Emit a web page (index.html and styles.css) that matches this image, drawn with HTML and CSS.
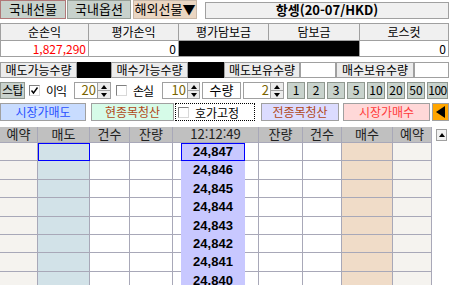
FILE: index.html
```html
<!DOCTYPE html>
<html lang="ko">

<head>
    <meta charset="utf-8">
    <title>해외선물 주문</title>
    <link rel="stylesheet" href="styles.css">
</head>

<body>
    <!-- Market tabs and symbol -->
    <div class="tabs">
        <div class="tab tab-on">국내선물</div>
        <div class="tab tab-opt">국내옵션</div>
        <div class="tab tab-fx">해외선물▼</div>
        <div class="title">항셍(20-07/HKD)</div>
    </div>

    <!-- Account summary -->
    <div class="summary">
        <div class="sum-head">순손익</div>
        <div class="sum-head">평가손익</div>
        <div class="sum-head">평가담보금</div>
        <div class="sum-head">담보금</div>
        <div class="sum-head">로스컷</div>
        <div class="sum-val sum-red">1,827,290</div>
        <div class="sum-val">0</div>
        <div class="sum-val sum-black"></div>
        <div class="sum-val">0</div>
    </div>

    <!-- Available / held quantities -->
    <div class="qty-row">
        <div class="qty-label qty-w77">매도가능수량</div>
        <div class="qty-black qty-w34"></div>
        <div class="qty-label qty-w77">매수가능수량</div>
        <div class="qty-black qty-w36"></div>
        <div class="qty-label qty-w76">매도보유수량</div>
        <div class="qty-box qty-w36"></div>
        <div class="qty-label qty-w78">매수보유수량</div>
        <div class="qty-box qty-w35"></div>
    </div>

    <!-- Stop settings and quantity -->
    <div class="ctrl-row">
        <div class="stop-btn">스탑</div>
        <div class="check check-profit">
            <svg width="9" height="9" viewBox="0 0 9 9"><path d="M1.5 4.5 L3.5 7 L7.5 1.5" fill="none" stroke="#000" stroke-width="1.4"/></svg>
        </div>
        <div class="ctrl-label">이익</div>
        <div class="spin spin-profit">
            <div class="spin-input">20</div>
            <div class="spin-arrows"><span><i class="tri-up"></i></span><span><i class="tri-dn"></i></span></div>
        </div>
        <div class="check check-loss"></div>
        <div class="ctrl-label">손실</div>
        <div class="spin spin-loss">
            <div class="spin-input">10</div>
            <div class="spin-arrows"><span><i class="tri-up"></i></span><span><i class="tri-dn"></i></span></div>
        </div>
        <div class="qty-name">수량</div>
        <div class="spin spin-qty">
            <div class="spin-input">2</div>
            <div class="spin-arrows"><span><i class="tri-up"></i></span><span><i class="tri-dn"></i></span></div>
        </div>
        <div class="steps">
            <div class="step">1</div>
            <div class="step">2</div>
            <div class="step">3</div>
            <div class="step">5</div>
            <div class="step">10</div>
            <div class="step">20</div>
            <div class="step">50</div>
            <div class="step step-wide">100</div>
        </div>
    </div>

    <!-- Order buttons -->
    <div class="order-row">
        <div class="order-btn sell-mkt">시장가매도</div>
        <div class="order-btn clear-one">현종목청산</div>
        <div class="fix">
            <div class="check check-fix"></div>
            <span>호가고정</span>
        </div>
        <div class="order-btn clear-all">전종목청산</div>
        <div class="order-btn buy-mkt">시장가매수</div>
        <div class="arrow-btn"><i class="tri-left"></i></div>
    </div>

    <!-- Order book -->
    <div class="book">
        <div class="book-row book-head">
            <div class="cell col-rsv-l">예약</div>
            <div class="cell col-sell">매도</div>
            <div class="cell col-cnt-l">건수</div>
            <div class="cell col-rem-l">잔량</div>
            <div class="cell col-mid">12:12:49</div>
            <div class="cell col-rem-r">잔량</div>
            <div class="cell col-cnt-r">건수</div>
            <div class="cell col-buy">매수</div>
            <div class="cell col-rsv-r">예약</div>
            <div class="col-scroll"><div class="scroll-up"><i class="tri-up"></i></div></div>
        </div>

        <div class="book-row">
            <div class="cell col-rsv-l"></div>
            <div class="cell col-sell sel"></div>
            <div class="cell col-cnt-l"></div>
            <div class="cell col-rem-l"></div>
            <div class="cell col-mid"><div class="gap-l"></div><div class="price sel">24,847</div><div class="gap-r"></div></div>
            <div class="cell col-rem-r"></div>
            <div class="cell col-cnt-r"></div>
            <div class="cell col-buy"></div>
            <div class="cell col-rsv-r"></div>
            <div class="col-scroll"></div>
        </div>
        <div class="book-row">
            <div class="cell col-rsv-l"></div>
            <div class="cell col-sell"></div>
            <div class="cell col-cnt-l"></div>
            <div class="cell col-rem-l"></div>
            <div class="cell col-mid"><div class="gap-l"></div><div class="price">24,846</div><div class="gap-r"></div></div>
            <div class="cell col-rem-r"></div>
            <div class="cell col-cnt-r"></div>
            <div class="cell col-buy"></div>
            <div class="cell col-rsv-r"></div>
            <div class="col-scroll"></div>
        </div>
        <div class="book-row">
            <div class="cell col-rsv-l"></div>
            <div class="cell col-sell"></div>
            <div class="cell col-cnt-l"></div>
            <div class="cell col-rem-l"></div>
            <div class="cell col-mid"><div class="gap-l"></div><div class="price">24,845</div><div class="gap-r"></div></div>
            <div class="cell col-rem-r"></div>
            <div class="cell col-cnt-r"></div>
            <div class="cell col-buy"></div>
            <div class="cell col-rsv-r"></div>
            <div class="col-scroll"></div>
        </div>
        <div class="book-row">
            <div class="cell col-rsv-l"></div>
            <div class="cell col-sell"></div>
            <div class="cell col-cnt-l"></div>
            <div class="cell col-rem-l"></div>
            <div class="cell col-mid"><div class="gap-l"></div><div class="price">24,844</div><div class="gap-r"></div></div>
            <div class="cell col-rem-r"></div>
            <div class="cell col-cnt-r"></div>
            <div class="cell col-buy"></div>
            <div class="cell col-rsv-r"></div>
            <div class="col-scroll"></div>
        </div>
        <div class="book-row">
            <div class="cell col-rsv-l"></div>
            <div class="cell col-sell"></div>
            <div class="cell col-cnt-l"></div>
            <div class="cell col-rem-l"></div>
            <div class="cell col-mid"><div class="gap-l"></div><div class="price">24,843</div><div class="gap-r"></div></div>
            <div class="cell col-rem-r"></div>
            <div class="cell col-cnt-r"></div>
            <div class="cell col-buy"></div>
            <div class="cell col-rsv-r"></div>
            <div class="col-scroll"></div>
        </div>
        <div class="book-row">
            <div class="cell col-rsv-l"></div>
            <div class="cell col-sell"></div>
            <div class="cell col-cnt-l"></div>
            <div class="cell col-rem-l"></div>
            <div class="cell col-mid"><div class="gap-l"></div><div class="price">24,842</div><div class="gap-r"></div></div>
            <div class="cell col-rem-r"></div>
            <div class="cell col-cnt-r"></div>
            <div class="cell col-buy"></div>
            <div class="cell col-rsv-r"></div>
            <div class="col-scroll"></div>
        </div>
        <div class="book-row">
            <div class="cell col-rsv-l"></div>
            <div class="cell col-sell"></div>
            <div class="cell col-cnt-l"></div>
            <div class="cell col-rem-l"></div>
            <div class="cell col-mid"><div class="gap-l"></div><div class="price">24,841</div><div class="gap-r"></div></div>
            <div class="cell col-rem-r"></div>
            <div class="cell col-cnt-r"></div>
            <div class="cell col-buy"></div>
            <div class="cell col-rsv-r"></div>
            <div class="col-scroll"></div>
        </div>
        <div class="book-row">
            <div class="cell col-rsv-l"></div>
            <div class="cell col-sell"></div>
            <div class="cell col-cnt-l"></div>
            <div class="cell col-rem-l"></div>
            <div class="cell col-mid"><div class="gap-l"></div><div class="price">24,840</div><div class="gap-r"></div></div>
            <div class="cell col-rem-r"></div>
            <div class="cell col-cnt-r"></div>
            <div class="cell col-buy"></div>
            <div class="cell col-rsv-r"></div>
            <div class="col-scroll"></div>
        </div>
    </div>
</body>

</html>
```
FILE: styles.css
```css
* {
    box-sizing: border-box;
}

body {
    margin: 0;
    width: 449px;
    height: 285px;
    overflow: hidden;
    background-color: #ffffff;
    color: #000000;
    font-family: "Noto Sans CJK KR", sans-serif;
    font-size: 12px;
}

/* Top tabs */
.tabs {
    display: flex;
    height: 20px;
}

.tabs > div,
.qty-row > div,
.ctrl-row > div,
.order-row > div,
.book-row > div {
    flex-shrink: 0;
    white-space: nowrap;
}

.tab {
    width: 66px;
    height: 19px;
    border: 1px solid #98a098;
    background-color: #c8d2cc;
    text-align: center;
    line-height: 16px;
    font-size: 13px;
}

.tab-on {
    border-color: #b07878;
}

.tab-opt {
    width: 64px;
    margin-left: 1px;
}

.tab-fx {
    width: 64px;
    margin-left: 2px;
    background-color: #ead6c2;
    border-color: #c8b8a8;
}

.tabs .title {
    flex: 1;
    height: 17px;
    margin-top: 2px;
    margin-left: 8px;
    border: 1px solid #a0a0a0;
    background-color: #f0f0f0;
    text-align: center;
    font-weight: bold;
    font-size: 13px;
    line-height: 14px;
}

/* Account summary */
.summary {
    display: grid;
    grid-template-columns: 87px 89px 89px 90px 88px;
    grid-template-rows: 16px 15px;
    gap: 1px;
    padding: 1px;
    margin-top: 3px;
    background-color: #a0a0a0;
}

.sum-head {
    overflow: hidden;
    background-color: #f0f0f0;
    text-align: center;
    line-height: 16px;
    font-size: 12px;
}

.sum-val {
    overflow: hidden;
    background-color: #ffffff;
    text-align: right;
    padding-right: 2px;
    line-height: 15px;
    font-size: 12px;
}

.sum-red {
    color: #ff0000;
}

.sum-black {
    grid-column: span 2;
    background-color: #000000;
}

/* Quantity row */
.qty-row {
    display: flex;
    height: 16px;
    margin-top: 5px;
}

.qty-label {
    border: 1px solid #a0a0a0;
    background-color: #ececec;
    text-align: center;
    line-height: 13px;
    font-size: 12px;
}

.qty-black {
    background-color: #000000;
}

.qty-box {
    border: 1px solid #a0a0a0;
    background-color: #ffffff;
}

.qty-w34 { width: 34px; }
.qty-w35 { width: 35px; }
.qty-w36 { width: 36px; }
.qty-w76 { width: 76px; }
.qty-w77 { width: 77px; }
.qty-w78 { width: 78px; }

/* Stop / quantity controls */
.ctrl-row {
    display: flex;
    align-items: center;
    height: 17px;
    margin-top: 4px;
}

.stop-btn {
    width: 25px;
    height: 17px;
    border: 1px solid #909890;
    background-color: #c8d2cc;
    text-align: center;
    line-height: 14px;
    font-size: 12px;
    letter-spacing: -0.5px;
}

.check {
    display: flex;
    align-items: center;
    justify-content: center;
    width: 11px;
    height: 11px;
    border: 1px solid;
    border-color: #808080 #d8d8d8 #d8d8d8 #808080;
    background-color: #ffffff;
}

.check-profit {
    margin-left: 4px;
}

.check-loss {
    margin-left: 5px;
}

.ctrl-label {
    width: 22px;
    margin-left: 6px;
    font-size: 12px;
    line-height: 17px;
    letter-spacing: -1px;
}

.spin {
    display: flex;
    height: 17px;
}

.spin-profit {
    margin-left: 6px;
}

.spin-loss {
    margin-left: 7px;
}

.spin-qty {
    margin-left: 2px;
}

.spin-input {
    width: 24px;
    border: 1px solid #a0a0a0;
    background-color: #ffffff;
    text-align: right;
    padding-right: 1px;
    color: #7a6400;
    font-size: 13px;
    line-height: 14px;
}

.spin-loss .spin-input {
    width: 26px;
}

.spin-qty .spin-input {
    width: 28px;
}

.spin-arrows {
    display: flex;
    flex-direction: column;
    width: 13px;
    border: 1px solid #a0a0a0;
    border-left: none;
    background-color: #ececec;
}

.spin-loss .spin-arrows {
    width: 12px;
}

.spin-arrows span {
    flex: 1;
    display: flex;
    align-items: center;
    justify-content: center;
}

.spin-arrows span + span {
    border-top: 1px solid #a0a0a0;
}

.tri-up {
    width: 0;
    height: 0;
    border-left: 3px solid transparent;
    border-right: 3px solid transparent;
    border-bottom: 4px solid #000000;
}

.tri-dn {
    width: 0;
    height: 0;
    border-left: 3px solid transparent;
    border-right: 3px solid transparent;
    border-top: 4px solid #000000;
}

.qty-name {
    width: 39px;
    height: 17px;
    margin-left: 2px;
    border: 1px solid #a0a0a0;
    background-color: #ffffff;
    text-align: center;
    font-size: 13px;
    line-height: 14px;
}

.steps {
    display: flex;
    gap: 2px;
    margin-left: 3px;
}

.step {
    width: 18px;
    height: 17px;
    border: 1px solid #909890;
    background-color: #c8d2cc;
    text-align: center;
    font-size: 12px;
    line-height: 14px;
}

.step-wide {
    width: 21px;
    letter-spacing: -0.5px;
}

/* Order buttons */
.order-row {
    display: flex;
    height: 18px;
    margin-top: 4px;
}

.order-btn {
    border: 1px solid #a0a0a0;
    text-align: center;
    font-size: 12px;
    line-height: 15px;
}

.sell-mkt {
    width: 86px;
    background-color: #c8dcff;
    color: #2850ff;
}

.clear-one {
    width: 83px;
    margin-left: 5px;
    background-color: #d6fbe8;
    color: #b04818;
}

.order-row .fix {
    display: flex;
    align-items: center;
    gap: 6px;
    width: 80px;
    margin-left: 1px;
    padding-left: 2px;
    border: 1px dotted #000000;
    font-size: 12px;
}

.clear-all {
    width: 78px;
    margin-left: 6px;
    background-color: #dcdcff;
    color: #b04818;
}

.buy-mkt {
    width: 87px;
    margin-left: 4px;
    background-color: #ffd8d8;
    color: #ff3838;
}

.order-row .arrow-btn {
    display: flex;
    align-items: center;
    justify-content: center;
    width: 17px;
    margin-left: 2px;
    border: 1px solid #a0a0a0;
    background-color: #ffa500;
}

.tri-left {
    width: 0;
    height: 0;
    border-top: 6px solid transparent;
    border-bottom: 6px solid transparent;
    border-right: 9px solid #000000;
}

/* Order book */
.book {
    margin-top: 6px;
}

.book-row {
    display: flex;
    height: 18.4px;
}

.book-head {
    height: 16px;
}

.cell {
    border-right: 1px solid #a8a8b8;
    border-bottom: 1px solid #a8a8b8;
}

.book-head .cell {
    background-color: #c0c0c0;
    color: #202020;
    text-align: center;
    font-size: 13px;
    line-height: 14px;
}

.col-rsv-l { width: 38px; background-color: #f5f3ef; }
.col-sell { width: 52px; background-color: #d2e2e8; }
.col-cnt-l { width: 40px; }
.col-rem-l { width: 43px; }
.col-mid { width: 86px; }
.col-rem-r { width: 44px; }
.col-cnt-r { width: 39px; }
.col-buy { width: 51px; background-color: #f0dcc8; }
.col-rsv-r { width: 39px; background-color: #f5f3ef; }
.col-scroll { width: 17px; }

.book-row .col-mid {
    display: flex;
    border-bottom: none;
}

.book-head .col-mid {
    display: block;
    border-bottom: 1px solid #a8a8b8;
}

.gap-l {
    width: 8px;
    border-bottom: 1px solid #a8a8b8;
}

.gap-r {
    width: 13px;
    border-bottom: 1px solid #a8a8b8;
}

.price {
    width: 64px;
    background-color: #c8c8ff;
    text-align: center;
    font-family: "Liberation Sans", sans-serif;
    font-weight: bold;
    font-size: 13px;
    line-height: 18px;
}

.sel {
    border: 1px solid #0000ff;
}

.price.sel {
    line-height: 16px;
}

.scroll-up {
    display: flex;
    align-items: center;
    justify-content: center;
    width: 11px;
    height: 12px;
    margin-top: 2px;
    margin-left: 4px;
    border: 1px solid #a0a0a0;
    background-color: #f0f0f0;
}
```
